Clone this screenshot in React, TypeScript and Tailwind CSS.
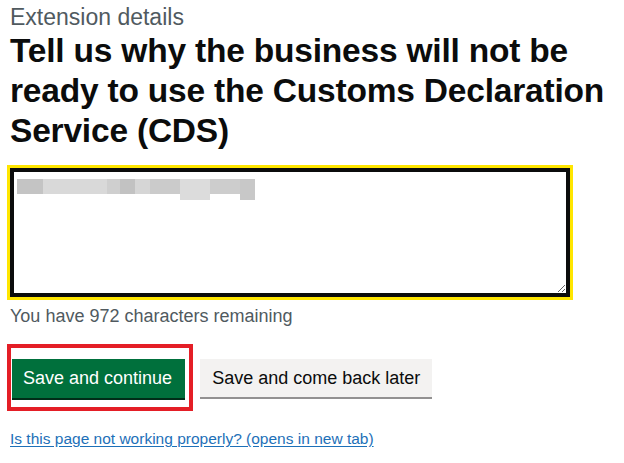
export default function App() {
  return (
    <div className="min-h-screen bg-white pl-[10px] pt-[5px] font-['Liberation_Sans',Arial,sans-serif] text-[#0b0c0c]">
      {/* Caption + heading */}
      <span className="block text-[23px] leading-[25px] text-[#505a5f]">Extension details</span>
      <h1 className="mt-[1px] w-[612px] text-[33.5px] font-bold leading-[40px] tracking-[-0.2px]">
        Tell us why the business will not be ready to use the Customs Declaration Service (CDS)
      </h1>

      {/* Focused textarea */}
      <div className="relative -ml-[3px] mt-[14px] w-[566px] border-[3px] border-[#ffe600]">
        <textarea
          readOnly
          className="block h-[129px] w-full resize-y border-4 border-[#0b0c0c] bg-white outline-none"
        />
        {/* blurred answer text */}
        <div className="pointer-events-none absolute left-[7px] top-[11px] flex items-start">
          <div className="h-[15px] w-[26px] bg-[#c4c4c4]" />
          <div className="h-[15px] w-[64px] bg-[#d9d9d9]" />
          <div className="h-[15px] w-[13px] bg-[#cfcfcf]" />
          <div className="h-[15px] w-[15px] bg-[#c2c2c2]" />
          <div className="h-[15px] w-[15px] bg-[#d6d6d6]" />
          <div className="h-[15px] w-[30px] bg-[#cbcbcb]" />
          <div className="h-[21px] w-[30px] bg-[#dcdcdc]" />
          <div className="h-[15px] w-[30px] bg-[#cdcdcd]" />
          <div className="h-[21px] w-[15px] bg-[#c8c8c8]" />
        </div>
      </div>

      <p className="mt-[6px] text-[18px] leading-[20px] text-[#505a5f]">You have 972 characters remaining</p>

      {/* Buttons */}
      <div className="mt-[18px] flex items-start">
        <div className="-ml-[3px] border-4 border-[#e41e26] pb-[9px] pl-[1px] pr-[4px] pt-[11px]">
          <button className="h-[39px] bg-[#00703c] pl-[11px] pr-[13px] text-[18px] leading-[37px] text-white shadow-[0_2px_0_#002d18]">
            Save and continue
          </button>
        </div>
        <button className="ml-[7px] mt-[15px] h-[38px] bg-[#f3f2f1] px-[12px] text-[18px] leading-[37px] text-[#0b0c0c] shadow-[0_2px_0_#929191]">
          Save and come back later
        </button>
      </div>

      <a href="#" className="mt-[18px] block w-fit text-[15.5px] leading-[20px] text-[#1d70b8] underline underline-offset-2">
        Is this page not working properly? (opens in new tab)
      </a>
    </div>
  );
}
